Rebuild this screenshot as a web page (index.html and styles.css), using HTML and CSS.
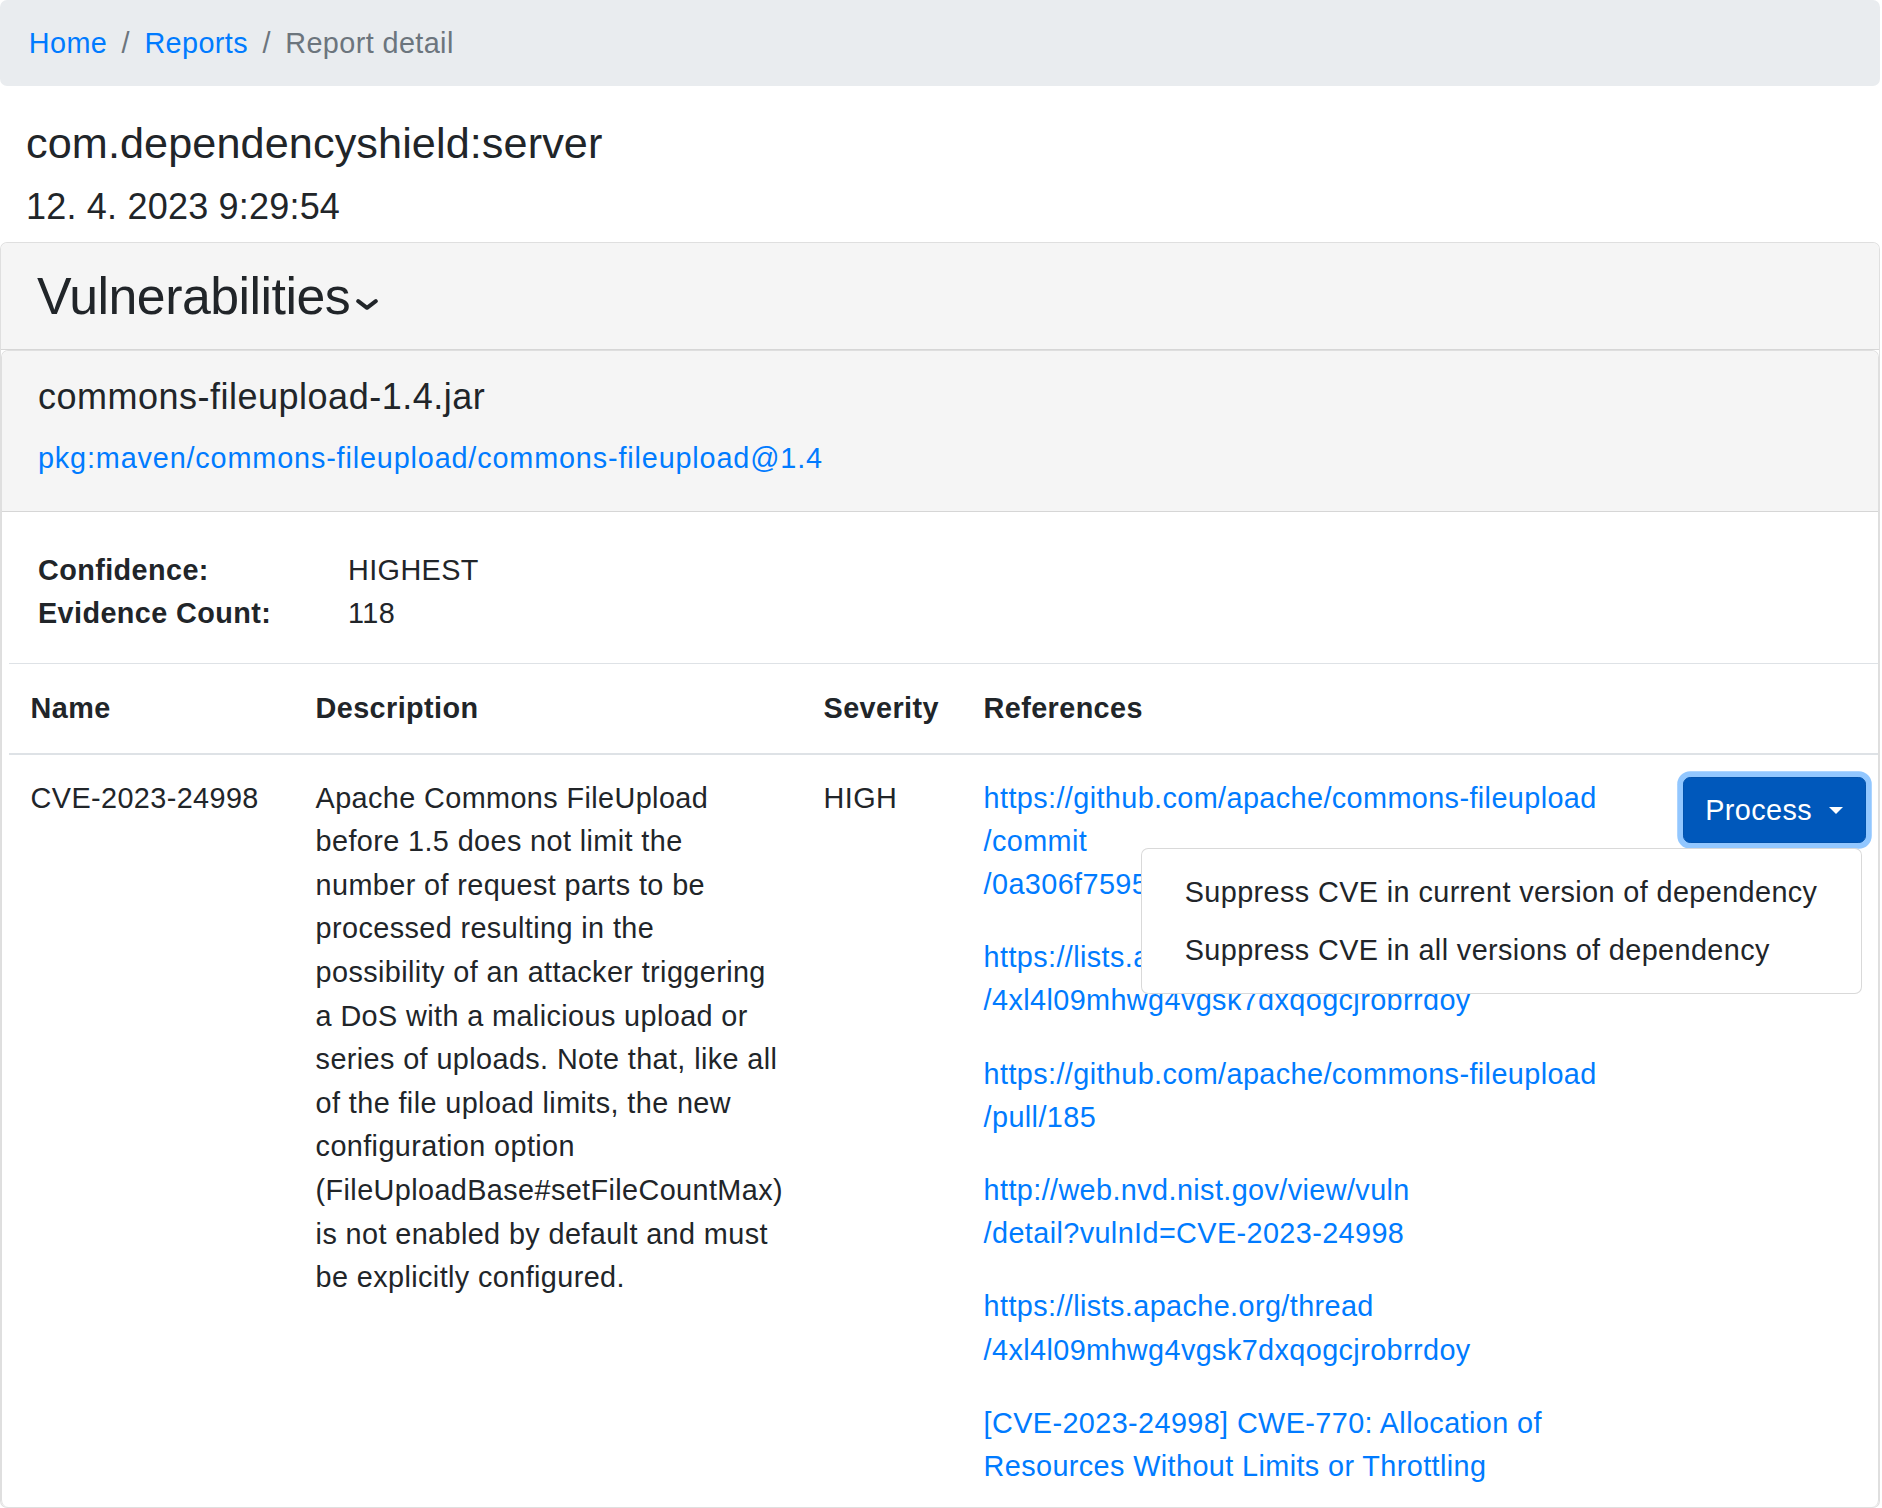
FILE: index.html
```html
<!DOCTYPE html>
<html lang="en">
<head>
<meta charset="utf-8">
<title>Report detail</title>
<link rel="stylesheet" href="styles.css">
</head>
<body>
<div class="page">
  <nav class="crumbs" aria-label="breadcrumb">
    <ol class="crumb-list">
      <li class="crumb-item"><a href="#">Home</a></li>
      <li class="crumb-item"><a href="#">Reports</a></li>
      <li class="crumb-item active">Report detail</li>
    </ol>
  </nav>

  <header class="report-head">
    <h4 class="project">com.dependencyshield:server</h4>
    <h5 class="stamp">12. 4. 2023 9:29:54</h5>
  </header>

  <section class="card">
    <div class="card-header section-head">
      <h3 class="section-title">Vulnerabilities<svg class="chevron" width="22" height="11" viewBox="0 0 22 11" aria-hidden="true"><polyline points="2.2,2.2 11,8.8 19.8,2.2" fill="none" stroke="#212529" stroke-width="4" stroke-linecap="round" stroke-linejoin="round"/></svg></h3>
    </div>

    <article class="card dep">
      <div class="card-header dep-head">
        <h5 class="dep-name">commons-fileupload-1.4.jar</h5>
        <a class="dep-purl" href="#">pkg:maven/commons-fileupload/commons-fileupload@1.4</a>
      </div>
      <div class="dep-body">
        <dl class="facts">
          <dt>Confidence:</dt><dd>HIGHEST</dd>
          <dt>Evidence Count:</dt><dd>118</dd>
        </dl>
      </div>

      <table class="vuln-table">
        <colgroup>
          <col class="c-name"><col class="c-desc"><col class="c-sev"><col class="c-refs"><col class="c-act">
        </colgroup>
        <thead>
          <tr><th>Name</th><th>Description</th><th>Severity</th><th>References</th><th></th></tr>
        </thead>
        <tbody>
          <tr>
            <td>CVE-2023-24998</td>
            <td class="desc">Apache Commons FileUpload before 1.5 does not limit the number of request parts to be processed resulting in the possibility of an attacker triggering a DoS with a malicious upload or series of uploads. Note that, like all of the file upload limits, the new configuration option (FileUploadBase#setFileCountMax) is not enabled by default and must be explicitly configured.</td>
            <td>HIGH</td>
            <td>
              <div class="refs">
                <a href="#">https://github.com<wbr>/apache<wbr>/commons-fileupload<wbr>/commit<wbr>/0a306f7595e5c6c1d9c1e8d63a0c7e4d5e8a9b0c</a>
                <a href="#">https://lists.apache.org<wbr>/thread<wbr>/4xl4l09mhwg4vgsk7dxqogcjrobrrdoy</a>
                <a href="#">https://github.com<wbr>/apache<wbr>/commons-fileupload<wbr>/pull<wbr>/185</a>
                <a href="#">http://web.nvd.nist.gov<wbr>/view<wbr>/vuln<wbr>/detail?&#8288;vulnId=CVE&#8288;-&#8288;2023&#8288;-&#8288;24998</a>
                <a href="#">https://lists.apache.org<wbr>/thread<wbr>/4xl4l09mhwg4vgsk7dxqogcjrobrrdoy</a>
                <a href="#">[CVE-2023-24998] CWE-770: Allocation of Resources Without Limits or Throttling</a>
              </div>
            </td>
            <td class="act">
              <div class="process">
                <button class="process-btn" type="button">Process</button>
                <div class="process-menu">
                  <a class="menu-item" href="#">Suppress CVE in current version of dependency</a>
                  <a class="menu-item" href="#">Suppress CVE in all versions of dependency</a>
                </div>
              </div>
            </td>
          </tr>
        </tbody>
      </table>
    </article>
  </section>
</div>
</body>
</html>
```

FILE: styles.css
```css
html, body {
  margin: 0;
  padding: 0;
  background: #fff;
}

body {
  font-family: "Liberation Sans", Arial, sans-serif;
  font-size: 28.8px;
  line-height: 1.5;
  color: #212529;
  letter-spacing: 0.4px;
}

a {
  color: #007bff;
  text-decoration: none;
}

.page {
  width: 1880px;
}

/* breadcrumb */
.crumbs {
  background: #e9ecef;
  border-radius: 7.2px;
  padding: 21.6px 28.8px;
  margin-bottom: 32px;
}

.crumb-list {
  display: flex;
  list-style: none;
  margin: 0;
  padding: 0;
}

.crumb-item + .crumb-item {
  padding-left: 14.4px;
}

.crumb-item + .crumb-item::before {
  content: "/";
  padding-right: 14.4px;
  color: #6c757d;
}

.crumb-item.active {
  color: #6c757d;
}

/* report heading */
.report-head {
  padding-left: 26px;
}

.project {
  font-size: 43.2px;
  font-weight: 500;
  line-height: 1.2;
  letter-spacing: 0.1px;
  margin: 0 0 14.4px;
}

.stamp {
  font-size: 36px;
  font-weight: 500;
  line-height: 1.2;
  letter-spacing: 0.2px;
  margin: 0 0 14.4px;
}

/* cards */
.card {
  border: 1px solid rgba(0, 0, 0, 0.125);
  border-radius: 7.2px;
  background: #fff;
}

.card-header {
  background: #f5f5f5;
  border-bottom: 1px solid rgba(0, 0, 0, 0.125);
  border-radius: 6.2px 6.2px 0 0;
}

.section-head {
  padding: 21.6px 36px;
}

.section-title {
  font-size: 51.84px;
  font-weight: 500;
  line-height: 1.2;
  letter-spacing: -0.5px;
  margin: 0;
}

.chevron {
  display: inline-block;
  margin-left: 6px;
  vertical-align: 4px;
}

.dep {
  border-bottom: none;
}

.dep-head {
  padding: 24px 36px 31px;
}

.dep-name {
  font-size: 36px;
  font-weight: 500;
  line-height: 1.2;
  letter-spacing: 0.5px;
  margin: 0 0 19px;
}

.dep-purl {
  display: block;
  letter-spacing: 0.85px;
}

.dep-body {
  padding: 37px 36px 0;
}

.facts {
  display: grid;
  grid-template-columns: 310px 1fr;
  margin: 0 0 27.6px;
}

.facts dt {
  font-weight: 700;
}

.facts dd {
  margin: 0;
}

/* table */
.vuln-table {
  margin-left: 7px;
  width: 1869px;
  table-layout: fixed;
  border-collapse: collapse;
}

.c-name { width: 285px; }
.c-desc { width: 508px; }
.c-sev { width: 160px; }
.c-refs { width: 699px; }
.c-act { width: 217px; }

.vuln-table th,
.vuln-table td {
  padding: 21.6px;
  text-align: left;
  border-top: 1px solid #dee2e6;
}

.vuln-table th {
  vertical-align: bottom;
  font-weight: 700;
  border-bottom: 2px solid #dee2e6;
  padding-top: 23px;
  padding-bottom: 23px;
}

.vuln-table td {
  vertical-align: top;
  padding-bottom: 19px;
}

.vuln-table td.desc {
  line-height: 43.6px;
}

.vuln-table td.act {
  padding-right: 10px;
}

.refs {
  display: flex;
  flex-direction: column;
  align-items: flex-start;
  gap: 30px;
}

/* process dropdown */
.process {
  position: relative;
  display: inline-block;
  vertical-align: top;
}

.process-btn {
  display: block;
  font-family: inherit;
  font-size: 28.8px;
  line-height: 1.5;
  letter-spacing: 0.4px;
  color: #fff;
  background: #0058bb;
  border: 1px solid #0052ad;
  border-radius: 7.2px;
  padding: 10.8px 21.6px;
  box-shadow: 0 0 0 5.76px rgba(38, 143, 255, 0.5);
  cursor: pointer;
}

.process-btn::after {
  content: "";
  display: inline-block;
  width: 0;
  height: 0;
  margin-left: 17px;
  vertical-align: 6px;
  border-top: 7px solid #fff;
  border-left: 7px solid transparent;
  border-right: 7px solid transparent;
}

.process-menu {
  position: absolute;
  top: calc(100% + 5px);
  right: 4px;
  z-index: 10;
  background: #fff;
  border: 1px solid rgba(0, 0, 0, 0.15);
  border-radius: 7.2px;
  padding: 14.4px 0;
  white-space: nowrap;
}

.menu-item {
  display: block;
  padding: 7.2px 43.2px;
  color: #212529;
}
```
